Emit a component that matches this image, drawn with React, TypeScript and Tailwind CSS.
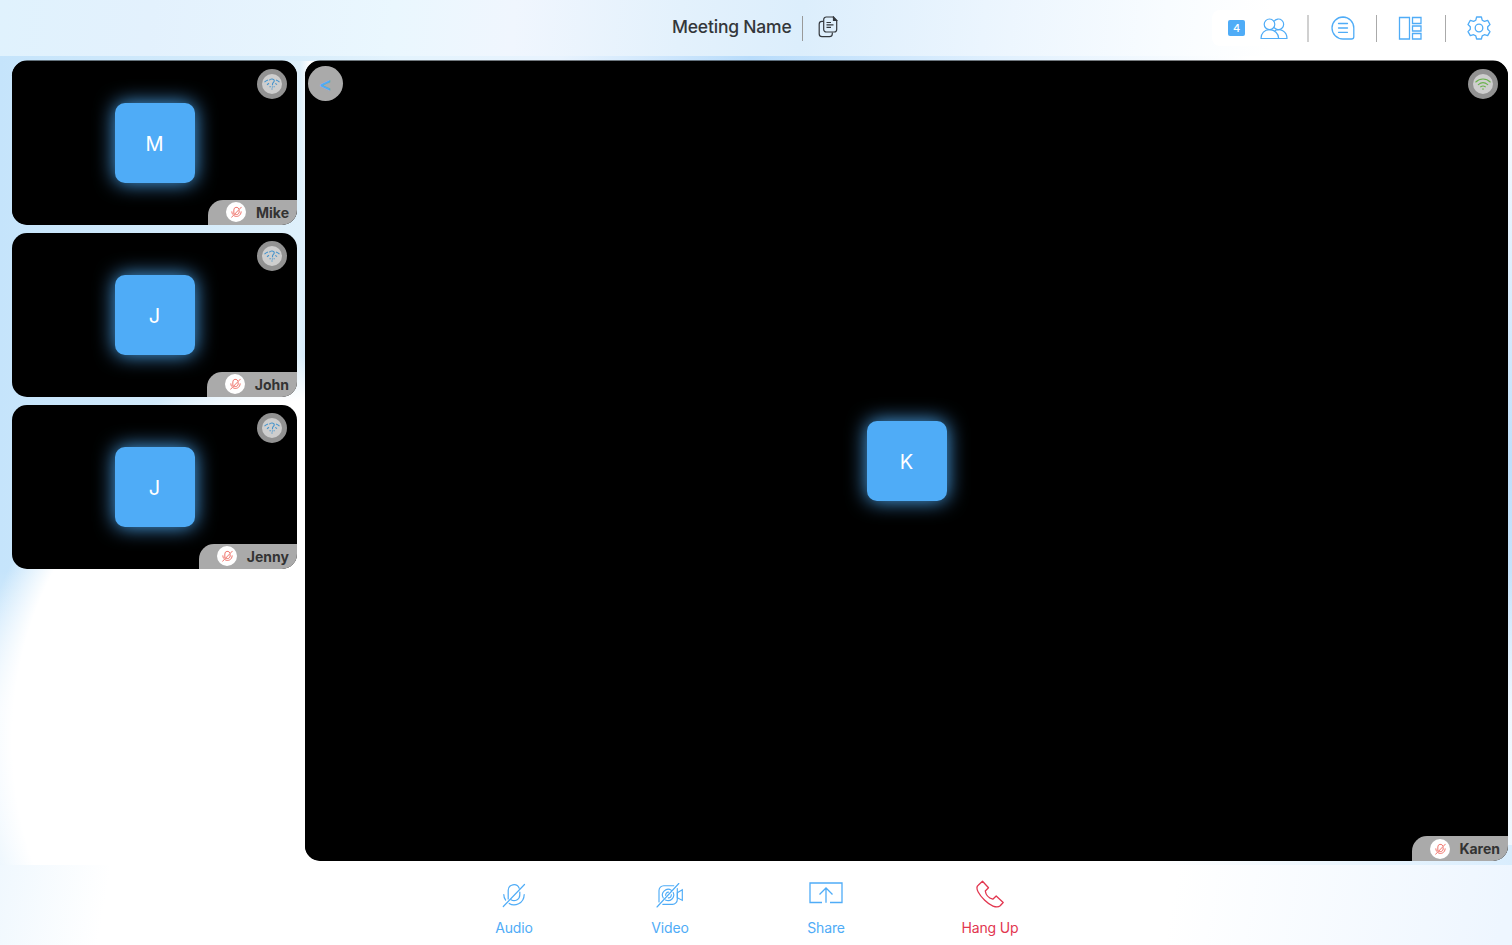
import React from "react";

const BLUE = "#4facf7";

function MicOff({ className, color = BLUE, width = 1.2 }: { className: string; color?: string; width?: number }) {
  return (
    <svg className={className} viewBox="0 0 24 26" fill="none" stroke={color} strokeWidth={width} strokeLinecap="round">
      <path d="M6.2 17V8.500a5.700 5.700 0 0 1 11-2.200M17.800 10v3a5.700 5.700 0 0 1-8.800 4.700" />
      <path d="M1.800 12.500c0 2.200.6 4.100 1.800 5.600M7.200 21.500c5.300 3.300 14.800.3 15-9" />
      <path d="M1.300 24.500 22.500 2.500" />
    </svg>
  );
}

function VideoOff() {
  return (
    <svg className="h-[26px] w-[28px]" viewBox="0 0 28 26" fill="none" stroke={BLUE} strokeWidth="1.150" strokeLinecap="round">
      <path d="M3 20V8.500A4.800 4.800 0 0 1 7.800 3.700h10M21.300 6.500v11a4.800 4.800 0 0 1-4.800 4.800H6.800" />
      <path d="M7.300 16a5.700 5.700 0 0 1 8.200-7.600M17.200 10.500A5.700 5.700 0 0 1 9.500 18" />
      <path d="M9.700 13.300a2.800 2.800 0 0 1 2.800-3.200M15.300 12.700a2.800 2.800 0 0 1-3 3.200" />
      <path d="m21.300 10.700 5-2.900v10.600l-5-2.700zM1 25 22.800 1.500" />
    </svg>
  );
}

function Share() {
  return (
    <svg className="h-[22px] w-[34px]" viewBox="0 0 34 22" fill="none" stroke={BLUE} strokeWidth="1.300">
      <path d="M13 20.500H1V1h32v19.500H21M17 20.800V6M10.500 12.500 17 6l6.500 6.500" />
    </svg>
  );
}

function Phone() {
  return (
    <svg className="h-[28px] w-[28px]" viewBox="0 0 28 28" fill="none" stroke="#e2364f" strokeWidth="1.300" strokeLinejoin="round">
      <path d="M6.500 1.200 12.500 7.800 9.300 11c.5 3.800 3.500 7 7.500 8.200l3.400-3.200 7 6.500-3 3.300c-3.500 3-10.500-.5-15.500-5.500S-1.500 8 2.200 5.300z" />
    </svg>
  );
}

function Copy() {
  return (
    <svg className="h-[22px] w-[20px]" viewBox="0 0 20 22" fill="none" stroke="#34383d" strokeWidth="1.200">
      <path d="M5.500 5.300H4A2.800 2.800 0 0 0 1.200 8v10A2.800 2.800 0 0 0 4 20.700h7.500a2.800 2.800 0 0 0 2.800-2.700v-1.500" />
      <path d="M15 1H8.300a2.500 2.500 0 0 0-2.600 2.500v10A2.500 2.500 0 0 0 8.300 16h7.900a2.500 2.500 0 0 0 2.500-2.500V4.700z" />
      <path d="M15.500 1v3.500h3.200z" fill="#34383d" />
      <path d="M8.500 6.500h4.500M8.500 8.800h7M8.500 11.400h4.500" />
    </svg>
  );
}

function People() {
  return (
    <svg className="h-[22px] w-[28px]" viewBox="0 0 28 22" fill="none" stroke={BLUE} strokeWidth="1.200" strokeLinejoin="round">
      <circle cx="9.500" cy="6.300" r="5.300" />
      <path d="M14 3.300a5.300 5.300 0 1 1 0 6" />
      <path d="M1 20.500c0-5 3.500-8.900 8.500-8.900s9.200 4 9.200 8.900zM14 13.200c6-3.800 13 0 13 7.300h-8.300" />
    </svg>
  );
}

function Chat() {
  return (
    <svg className="h-[24px] w-[24px]" viewBox="0 0 24 24" fill="none" stroke={BLUE} strokeWidth="1.300" strokeLinecap="round">
      <path d="M12 1a11 11 0 1 0 0 22h8.500c1.500 0 2.300-.8 2.300-2.300V12A11 11 0 0 0 12 1zM7.500 7.500h9M7.500 12h9M7.500 16.300h9" />
    </svg>
  );
}

function Layout() {
  return (
    <svg className="h-[24px] w-[24px]" viewBox="0 0 24 24" fill="none" stroke={BLUE} strokeWidth="1.300">
      <path d="M1.500 1.500h10v21.500h-10zM14.500 1.500H23v6h-8.500zM14.500 10H23v5h-8.500zM14.500 17.500H23V23h-8.500z" />
    </svg>
  );
}

function Gear() {
  return (
    <svg className="h-[24px] w-[24px]" viewBox="0 0 24 24" fill="none" stroke={BLUE} strokeWidth="1.300" strokeLinejoin="round">
      <path d="M9.600 1h4.800l.8 3.200 2.200 1.200 3.300-1 2.300 4.100-2.300 2.300v2.500l2.300 2.300-2.300 4-3.300-.9-2.200 1.200-.8 3.100H9.600l-.8-3.100-2.200-1.200-3.300.9-2.300-4 2.300-2.300v-2.500L1 8.500l2.300-4.100 3.300 1 2.200-1.200z" />
      <circle cx="12" cy="12" r="3.800" />
    </svg>
  );
}

function Signal({ good = false }: { good?: boolean }) {
  return (
    <div className="absolute right-[10px] top-[8px] flex size-[30px] items-center justify-center rounded-full bg-[#929292]">
      <div className="flex size-[20px] items-center justify-center rounded-full bg-[#cecece]">
        {good ? (
          <svg className="h-[12px] w-[16px]" viewBox="0 0 16 12" fill="none" stroke="#69b34c" strokeWidth="1.100" strokeLinecap="round">
            <path d="M.8 4c4-4 10.400-4 14.400 0M3.300 6.600c2.800-2.400 6.600-2.400 9.400 0M5.700 8.800c1.500-1 3.100-1 4.600 0" />
            <circle cx="8" cy="11" r=".3" />
          </svg>
        ) : (
          <svg className="h-[12px] w-[16px]" viewBox="0 0 16 12" fill="none" stroke="#4594cd" strokeWidth="1.100">
            <path d="M.5 4.200C1.500 3.200 2.600 2.500 4 2M12 2c1.400.5 2.500 1.200 3.500 2.200M3 6.700l2-1.400M11.300 5.300l1.700 1.400" />
            <path d="M5.300 2.200C6.500.3 10.300.6 10.300 2.800 10.300 4.300 8.500 4.500 8.500 6v1.200" />
            <path d="M5.500 8.700h1.300M9.600 8.700h1.100M7.800 9h1.200M7.400 11h1.200" />
          </svg>
        )}
      </div>
    </div>
  );
}

function Tile({ name, tag, large = false, first = false }: { name: string; tag: string; large?: boolean; first?: boolean }) {
  const size = large ? "min-w-0 flex-1" : "h-[164px] w-[285px] shrink-0";
  const edge = large || first ? "shadow-[0_-0.5px_0_#000]" : "";
  const label = large ? "leading-[20px]" : "pt-px leading-[20px]";
  return (
    <section className={`relative flex items-center justify-center rounded-[15px] bg-black ${size} ${edge}`}>
      <div className="flex size-[80px] items-center justify-center rounded-[10px] bg-[#4facf7] pt-[2px] text-[20px] text-white shadow-[0_0_20px_#4facf7]">
        {name[0]}
      </div>
      <Signal good={large} />
      {large && (
        <button className="absolute left-[3px] top-[5px] flex size-[35px] items-center justify-center rounded-full bg-[#aaa] pt-[2px] text-[20px] font-medium leading-none text-[#4facf7]">
          &lt;
        </button>
      )}
      <div className={`absolute bottom-0 right-0 flex h-[25px] items-center justify-between rounded-br-[15px] rounded-tl-[15px] bg-[#aaa] pl-[18px] pr-[8px] ${tag}`}>
        <span className="flex size-[20px] items-center justify-center rounded-full bg-white">
          <MicOff className="h-[12px] w-[11px]" color="#ee6057" width={1.900} />
        </span>
        <span className={`text-[14px] font-bold text-[#333] ${label}`}>{name}</span>
      </div>
    </section>
  );
}

export default function App() {
  return (
    <div className="flex h-[945px] w-[1512px] flex-col overflow-hidden bg-[radial-gradient(ellipse_340px_370px_at_325px_740px,#fff_0%,#fff_92%,transparent_104%),linear-gradient(180deg,transparent_0px,transparent_570px,rgba(255,255,255,.7)_710px,rgba(255,255,255,.6)_945px),linear-gradient(90deg,#c5e4fb_0px,#def0fb_300px,transparent_310px),linear-gradient(180deg,transparent_70px,#bfe0fb_460px,#d5ebfc_860px)] font-['Inter','Liberation_Sans',sans-serif]">
      <header className="grid h-[56px] shrink-0 grid-cols-[1fr_auto_1fr] items-center bg-[linear-gradient(95deg,#e0f2fd_0%,#e3f1fd_10%,#eaf7fe_26%,#f0f6fe_34%,#e3f1fc_45%,#dceefc_53%,#ebf5fe_65%,#f8fcff_77%,#fff_84%)]">
        <div />
        <div className="mr-[2px] flex items-center pb-[2px]">
          <h1 className="w-[120px] whitespace-nowrap pt-px text-[17.500px] font-medium tracking-[-0.2px] text-[#34373a]">Meeting Name</h1>
          <div className="ml-[10px] mr-[15px] mt-[3px] h-[25px] w-px bg-[#999]" />
          <div className="-mt-px"><Copy /></div>
        </div>
        <div className="flex items-center justify-end pr-[21px]">
          <div className="flex h-[36px] items-center rounded-[8px] bg-white pl-[16px] pr-[19px]">
            <span className="mr-[15px] flex h-[16px] w-[17px] items-center justify-center rounded-[2px] bg-[#4facf7] text-[11px] font-medium text-white">4</span>
            <span className="pt-[2px]"><People /></span>
          </div>
          <div className="mr-[22px] h-[27px] w-[2px] bg-[#d0d0d0]" />
          <Chat />
          <div className="mx-[21px] h-[27px] w-px bg-[#aaa]" />
          <Layout />
          <div className="ml-[23px] mr-[21px] h-[27px] w-px bg-[#aaa]" />
          <Gear />
        </div>
      </header>
      <main className="flex h-[809px] shrink-0 gap-[8px] bg-[linear-gradient(90deg,#c5e4fb_0px,#d8edfb_300px,#e3f3fd_400px,#e8f3fe_560px,#b8dcfb_750px,#e0f0fe_1000px,#fff_1250px),linear-gradient(90deg,transparent_310px,#fff_310px,#fff_1150px,#d9edfd_1512px)] bg-[length:100%_20px,100%_20px] bg-[position:0_-15px,0_100%] bg-no-repeat pb-[4px] pl-[12px] pr-[4px] pt-[4.500px]">
        <aside className="flex flex-col gap-[8px]">
          <Tile name="Mike" tag="w-[89px]" first />
          <Tile name="John" tag="w-[90px]" />
          <Tile name="Jenny" tag="w-[98px]" />
        </aside>
        <Tile name="Karen" tag="w-[96px]" large />
      </main>
      <footer className="flex h-[80px] shrink-0 justify-center bg-[linear-gradient(100deg,#f0f8fe_0px,#fff_110px,#fff_1160px,#eef6ff_1490px)] text-[14px] tracking-[-0.15px] text-[#4facf7]">
        <div className="flex w-[156px] flex-col items-center pt-[17px]">
          <div className="flex h-[26px] items-center"><MicOff className="h-[26px] w-[24px]" /></div>
          <span className="mt-[10px] leading-[20px]">Audio</span>
        </div>
        <div className="flex w-[156px] flex-col items-center pt-[17px]">
          <div className="flex h-[26px] items-center"><VideoOff /></div>
          <span className="mt-[10px] leading-[20px]">Video</span>
        </div>
        <div className="flex w-[156px] flex-col items-center pt-[17px]">
          <div className="flex h-[26px] items-start"><Share /></div>
          <span className="mt-[10px] leading-[20px]">Share</span>
        </div>
        <div className="flex w-[172px] flex-col items-center pt-[15px] text-[#e2364f]">
          <div className="flex h-[28px] items-center"><Phone /></div>
          <span className="mt-[10px] leading-[20px]">Hang Up</span>
        </div>
      </footer>
    </div>
  );
}
